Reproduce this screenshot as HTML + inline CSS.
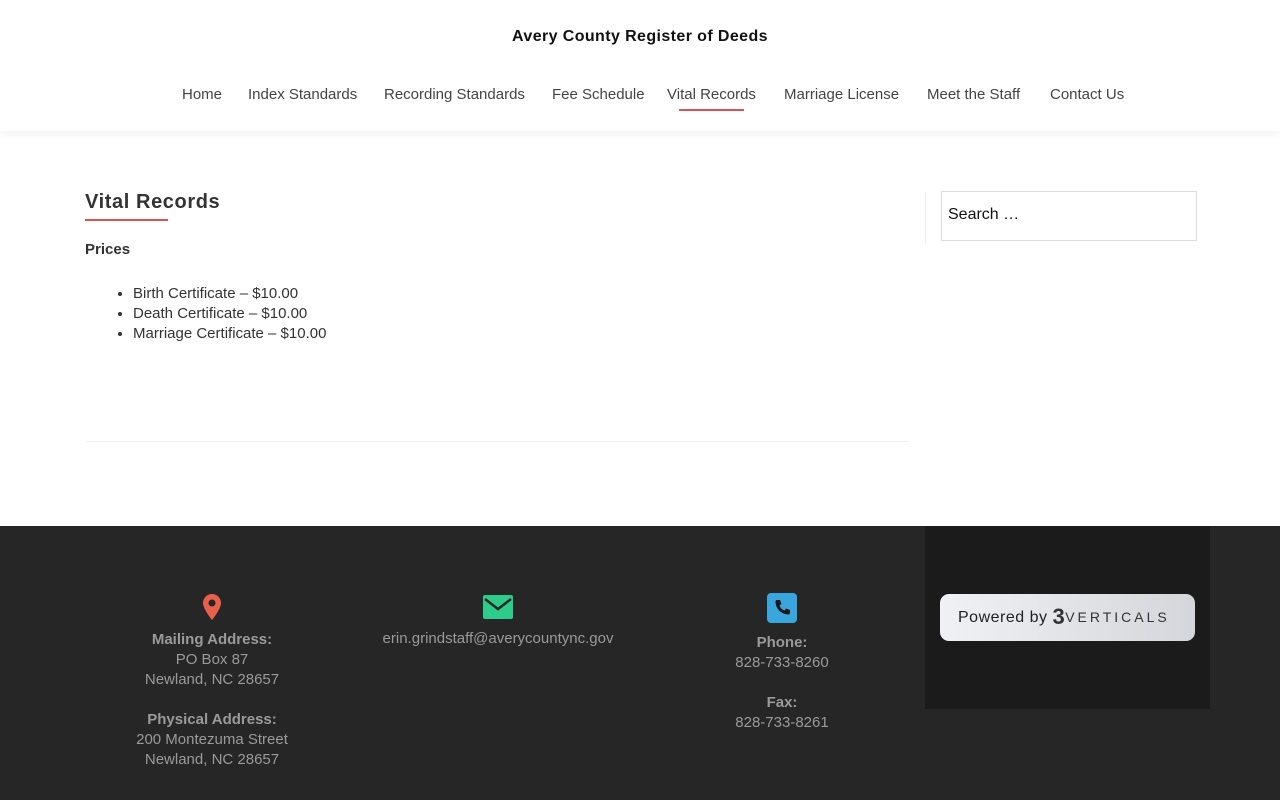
<!DOCTYPE html>
<html><head><meta charset="utf-8"><style>
*{margin:0;padding:0;box-sizing:border-box}
body{width:1280px;height:800px;overflow:hidden;font-family:"Liberation Sans",sans-serif;background:#fff;color:#333}
.hdr{height:131px;background:#fff;box-shadow:0 2px 8px rgba(0,0,0,.07);position:relative}
.title{position:absolute;top:28px;width:100%;text-align:center;font-weight:bold;font-size:16px;letter-spacing:.4px;color:#111}
.nav{position:absolute;top:86px;left:0;width:100%;font-size:15px;color:#444}
.nav span{position:absolute;white-space:nowrap}
.nav .act:after{content:"";position:absolute;left:12px;right:12px;top:23px;height:2px;background:#d9534f}
h1{position:absolute;left:85px;top:191px;font-size:20px;letter-spacing:.6px;color:#333}
.ul1{position:absolute;left:85px;top:219px;width:83px;height:2px;background:#d9534f}
.prices{position:absolute;left:85px;top:241px;font-weight:bold;font-size:15px}
ul{position:absolute;left:133px;top:284px;font-size:15px;line-height:20px}
.hr{position:absolute;left:85px;top:441px;width:825px;height:1px;background:#eee}
.vl{position:absolute;left:925px;top:192px;width:1px;height:52px;background:#eee}
.search{position:absolute;left:941px;top:191px;width:256px;height:50px;border:1px solid #ddd;font-size:16px;color:#111;padding:14px 6px}
.foot{position:absolute;top:526px;left:0;width:1280px;height:274px;background:#262626;color:#9a9a9a;font-size:15px;line-height:20px;text-align:center}
.col{position:absolute;top:68px}
.col b{color:#9a9a9a}
.dark{position:absolute;left:925px;top:0;width:285px;height:183px;background:#1b1b1b}
.pw{position:absolute;left:15px;top:68px;width:255px;height:47px;border-radius:9px;background:linear-gradient(90deg,#f0f1f4,#d4d6db);color:#222;font-size:16px;letter-spacing:.5px;line-height:46px;text-align:left;padding-left:18px}
</style></head><body>
<div class="hdr"><div class="title">Avery County Register of Deeds</div>
<div class="nav"><span style="left:182px">Home</span><span style="left:248px">Index Standards</span><span style="left:384px">Recording Standards</span><span style="left:552px">Fee Schedule</span><span class="act" style="left:667px">Vital Records</span><span style="left:784px">Marriage License</span><span style="left:927px">Meet the Staff</span><span style="left:1050px">Contact Us</span></div></div>
<h1>Vital Records</h1><div class="ul1"></div>
<div class="prices">Prices</div>
<ul><li>Birth Certificate – $10.00</li><li>Death Certificate – $10.00</li><li>Marriage Certificate – $10.00</li></ul>
<div class="hr"></div><div class="vl"></div>
<div class="search">Search …</div>
<div class="foot">
<div class="col" style="left:112px;width:200px;top:68px"><svg width="18" height="26" viewBox="0 0 18 26" style="display:block;margin:0 auto 10px"><path d="M9 0C4 0 0 4 0 9c0 6 9 17 9 17s9-11 9-17c0-5-4-9-9-9z" fill="#e8604c"/><circle cx="9" cy="9" r="3.5" fill="#262626"/></svg><b>Mailing Address:</b><br>PO Box 87<br>Newland, NC 28657<br><br><b>Physical Address:</b><br>200 Montezuma Street<br>Newland, NC 28657</div>
<div class="col" style="left:348px;width:300px;top:69px"><svg width="30" height="24" viewBox="0 0 30 24" style="display:block;margin:0 auto 10px"><rect width="30" height="24" rx="2" fill="#2ecc8a"/><path d="M2 4l13 10 13-10" stroke="#262626" stroke-width="2.5" fill="none"/></svg>erin.grindstaff@averycountync.gov</div>
<div class="col" style="left:682px;width:200px;top:67px"><svg width="30" height="30" viewBox="0 0 30 30" style="display:block;margin:0 auto 10px"><rect width="30" height="30" rx="4" fill="#3aa6de"/><path d="M10 7l3 0 1.5 4-2 1.5c1 2.5 2.5 4 5 5l1.5-2 4 1.5v3c0 1-1 1.5-2 1.5C14 21 9 16 8.5 9c0-1 .5-2 1.5-2z" fill="#1a1a1a"/></svg><b>Phone:</b><br>828-733-8260<br><br><b>Fax:</b><br>828-733-8261</div>
<div class="dark"><div class="pw">Powered by <span style="font-size:22px;font-weight:bold;vertical-align:-2px;color:#333">3</span><span style="letter-spacing:3px;font-size:14px;color:#333">VERTICALS</span></div></div>
</div>
</body></html>
